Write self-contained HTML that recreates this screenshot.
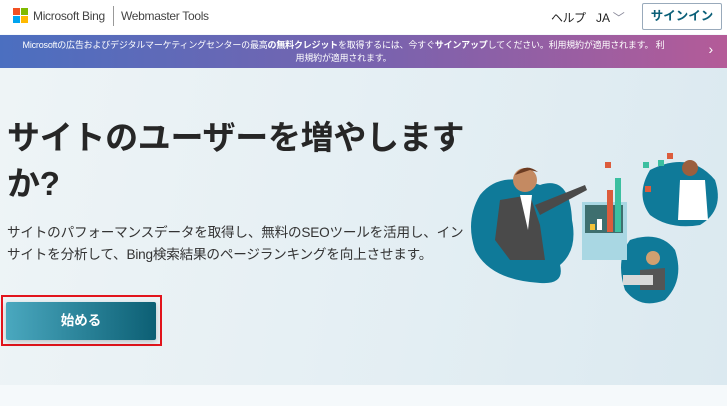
<!DOCTYPE html>
<html><head><meta charset="utf-8"><style>
*{margin:0;padding:0;box-sizing:border-box}
body{width:727px;height:406px;overflow:hidden;font-family:"Liberation Sans","Noto Sans CJK JP",sans-serif;background:#f5f9fb;position:relative}
.hdr{height:34px;background:#fff;position:relative}
.logo{position:absolute;left:13px;top:8px;width:16px;height:16px}
.logo i{position:absolute;width:7px;height:7px}
.brand{position:absolute;left:33px;top:9px;font-size:12px;color:#444;letter-spacing:-0.3px}
.sep{position:absolute;left:113px;top:6px;width:1px;height:20px;background:#999}
.wm{position:absolute;left:121px;top:9px;font-size:12px;color:#444;letter-spacing:-0.3px}
.help{position:absolute;left:551px;top:9px;font-size:12px;color:#222;letter-spacing:-0.5px}
.ja{position:absolute;left:596px;top:9px;font-size:12px;color:#222}
.sign{position:absolute;left:642px;top:3px;width:80px;height:27px;border:1px solid #9ab;color:#0a5f78;font-size:12.5px;font-weight:bold;text-align:center;line-height:25px;border-radius:2px}
.ban{position:absolute;top:35px;left:0;width:727px;height:33px;background:linear-gradient(90deg,#4b6fc0,#7c62ad 55%,#b45b98);color:#fff;font-size:9px;text-align:center;line-height:13px;padding:4px 40px 0 0;letter-spacing:-0.2px}
.hero{position:absolute;top:68px;left:0;width:727px;height:317px;background:linear-gradient(100deg,#eef4f6,#e3eef3 60%,#dbe9f0)}
h1{position:absolute;left:7px;top:115px;font-size:33px;font-weight:bold;color:#262626;line-height:46px;width:470px;letter-spacing:-0.3px}
p{position:absolute;left:7px;top:222px;font-size:13.6px;color:#333;line-height:22px;width:462px;letter-spacing:-0.2px}
.box{position:absolute;left:1px;top:295px;width:161px;height:51px;border:2px solid #e2141c}
.btn{position:absolute;left:6px;top:302px;width:150px;height:38px;background:linear-gradient(90deg,#4aa8bf,#0c5f74);color:#fff;font-weight:600;font-size:13.5px;text-align:center;line-height:38px;border-radius:2px;box-shadow:0 2px 6px rgba(0,0,0,.2)}
</style></head><body>
<div class="hdr">
<div class="logo"><i style="left:0;top:0;background:#f25022"></i><i style="left:8px;top:0;background:#7fba00"></i><i style="left:0;top:8px;background:#00a4ef"></i><i style="left:8px;top:8px;background:#ffb900"></i></div>
<div class="brand">Microsoft Bing</div><div class="sep"></div><div class="wm">Webmaster Tools</div>
<div class="help">ヘルプ</div><div class="ja">JA <span style="color:#889">﹀</span></div>
<div class="sign">サインイン</div>
</div>
<div class="ban">Microsoftの広告およびデジタルマーケティングセンターの最高<b>の無料クレジット</b>を取得するには、今すぐ<b>サインアップ</b>してください。利用規約が適用されます。 利<br>用規約が適用されます。<span style="position:absolute;right:14px;top:8px;font-size:14px">›</span></div>
<div class="hero"></div>
<h1>サイトのユーザーを増やします か?</h1>
<p>サイトのパフォーマンスデータを取得し、無料のSEOツールを活用し、イン<br>サイトを分析して、Bing検索結果のページランキングを向上させます。</p>
<div class="box"></div><div class="btn">始める</div>
<svg style="position:absolute;left:460px;top:140px" width="267" height="180" viewBox="0 0 267 180">
<path d="M20 55 Q40 30 80 45 Q110 35 112 80 Q118 110 100 125 Q105 145 80 143 Q30 140 15 110 Q5 80 20 55Z" fill="#0f7a99"/>
<path d="M190 30 Q230 10 255 40 Q265 70 240 85 Q210 90 190 75 Q175 55 190 30Z" fill="#0f7a99"/>
<path d="M170 100 Q200 90 215 110 Q225 140 205 160 Q180 170 165 150 Q155 120 170 100Z" fill="#0f7a99"/>
<rect x="122" y="62" width="45" height="58" fill="#a9d7e3"/>
<rect x="125" y="65" width="38" height="28" fill="#3e6f6f"/>
<rect x="147" y="50" width="6" height="42" fill="#dc5c3c"/><rect x="155" y="38" width="6" height="54" fill="#3cbfa0"/>
<rect x="130" y="84" width="5" height="6" fill="#f3c339"/><rect x="137" y="79" width="5" height="11" fill="#fff"/>
<rect x="145" y="22" width="6" height="6" fill="#dc5c3c"/><rect x="183" y="22" width="6" height="6" fill="#3cbfa0"/><rect x="198" y="20" width="6" height="6" fill="#3cbfa0"/><rect x="207" y="13" width="6" height="6" fill="#dc5c3c"/><rect x="185" y="46" width="6" height="6" fill="#dc5c3c"/>
<path d="M40 60 L70 55 L80 85 L85 120 L50 120 L35 100Z" fill="#4a4a4a"/>
<path d="M60 55 L72 55 L68 90Z" fill="#fff"/>
<circle cx="65" cy="40" r="12" fill="#c48a62"/><path d="M55 35 Q65 22 78 32 L70 30Z" fill="#6b3b22"/>
<path d="M75 65 L125 45 L127 50 L80 75Z" fill="#4a4a4a"/>
<path d="M220 40 L245 40 L248 80 L218 80Z" fill="#fff"/><circle cx="230" cy="28" r="8" fill="#9b5f3e"/>
<path d="M180 130 L205 128 L205 150 L180 150Z" fill="#555"/><circle cx="193" cy="118" r="7" fill="#d0a070"/>
<rect x="163" y="135" width="30" height="10" fill="#d8d8d8"/>
</svg>
</body></html>
